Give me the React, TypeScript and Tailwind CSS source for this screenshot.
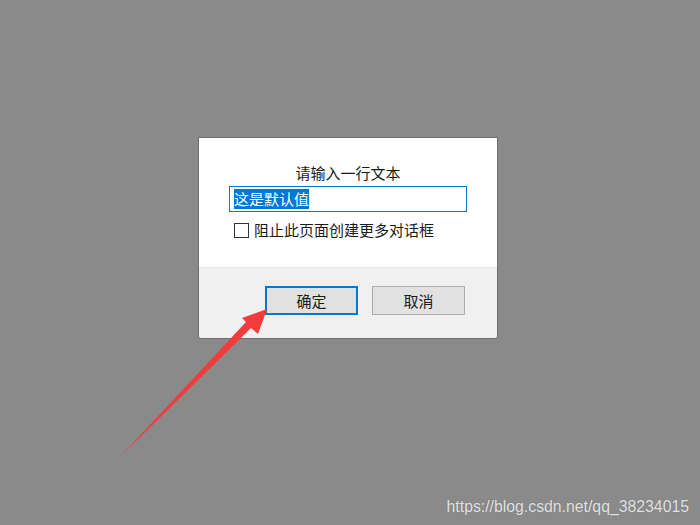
export default function App() {
    return (
        <div className="relative w-[700px] h-[525px] overflow-hidden bg-[#8a8a8a] font-['Noto_Sans_CJK_SC',sans-serif] text-[#1a1a1a]">
            <div className="pt-[137px] pl-[198px]">
                <div className="flex flex-col w-[300px] h-[202px] border border-[#707070] rounded-b-[3px] overflow-hidden">
                    <div className="flex flex-col items-center h-[130px] bg-white border-b border-[#e6e6e6]">
                        <div className="mt-[25px] text-[15px] leading-[20px]">请输入一行文本</div>
                        <div className="flex items-center self-start ml-[30px] mt-[3px] w-[238px] h-[26px] border border-[#0078d7] px-[4px]">
                            <span className="bg-[#0078d7] text-white text-[15px] leading-[20px]">这是默认值</span>
                        </div>
                        <label className="flex items-center self-start ml-[35px] mt-[8px] gap-[5px]">
                            <span className="w-[15px] h-[15px] border border-[#333] bg-white" />
                            <span className="text-[15px] leading-[20px]">阻止此页面创建更多对话框</span>
                        </label>
                    </div>
                    <div className="flex-1 flex gap-[14px] bg-[#f0f0f0] pl-[66px] pt-[18px]">
                        <button className="w-[93px] h-[29px] border-2 border-[#0078d7] bg-[#e1e1e1] text-[15px] leading-none">确定</button>
                        <button className="w-[93px] h-[29px] border border-[#adadad] bg-[#e1e1e1] text-[15px] leading-none">取消</button>
                    </div>
                </div>
            </div>

            {/* red arrow annotation */}
            <svg className="absolute left-0 top-0" width="700" height="525" viewBox="0 0 700 525">
                <polygon
                    points="267,309 258,334 251,328 120,457 246,322 242,318"
                    fill="#f23c3c"
                />
            </svg>

            <div className="absolute right-[11px] bottom-[9px] font-['Liberation_Sans',sans-serif] text-[15.8px] leading-[18px] text-[#e2e2e2] [text-shadow:0_0_1px_rgba(0,0,0,0.25)]">
                https://blog.csdn.net/qq_38234015
            </div>
        </div>
    )
}
